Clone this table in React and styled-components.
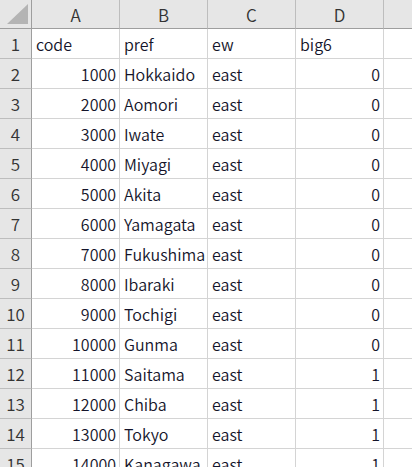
import React from "react";
import styled, { createGlobalStyle } from "styled-components";

const GlobalStyle = createGlobalStyle`
  html, body {
    margin: 0;
    padding: 0;
    background: #ffffff;
    overflow: hidden;
  }
`;

const columns = ["A", "B", "C", "D", "E"];

const rows = [
  ["code", "pref", "ew", "big6"],
  [1000, "Hokkaido", "east", 0],
  [2000, "Aomori", "east", 0],
  [3000, "Iwate", "east", 0],
  [4000, "Miyagi", "east", 0],
  [5000, "Akita", "east", 0],
  [6000, "Yamagata", "east", 0],
  [7000, "Fukushima", "east", 0],
  [8000, "Ibaraki", "east", 0],
  [9000, "Tochigi", "east", 0],
  [10000, "Gunma", "east", 0],
  [11000, "Saitama", "east", 1],
  [12000, "Chiba", "east", 1],
  [13000, "Tokyo", "east", 1],
  [14000, "Kanagawa", "east", 1],
];

const Sheet = styled.div`
  display: grid;
  grid-template-columns: 32px repeat(5, 88px);
  grid-auto-rows: 30px;
  grid-template-rows: 29px;
  width: 412px;
  height: 467px;
  overflow: hidden;
  font-family: "Noto Sans CJK JP", "Noto Sans", sans-serif;
  font-size: 16px;
  font-weight: 350;
`;

const Corner = styled.div`
  position: relative;
  background: #e6e6e6;
  border-right: 1px solid #9e9e9e;
  border-bottom: 1px solid #9e9e9e;

  &::after {
    content: "";
    position: absolute;
    right: 3px;
    bottom: 4px;
    width: 0;
    height: 0;
    border-left: 21px solid transparent;
    border-bottom: 20px solid #b4b4b4;
  }
`;

const ColHead = styled.div`
  display: flex;
  align-items: center;
  justify-content: center;
  background: #e6e6e6;
  color: #333;
  font-size: 17px;
  border-right: 1px solid #bdbdbd;
  border-bottom: 1px solid #9e9e9e;
`;

const RowHead = styled.div`
  display: flex;
  align-items: center;
  justify-content: center;
  background: #e6e6e6;
  color: #333;
  font-size: 17px;
  border-right: 1px solid #9e9e9e;
  border-bottom: 1px solid #bdbdbd;
`;

const Cell = styled.div`
  display: flex;
  align-items: center;
  justify-content: ${(p) => (p.$num ? "flex-end" : "flex-start")};
  padding: 0 ${(p) => (p.$num ? "3px" : "0")} 0 ${(p) => (p.$num ? "0" : "4px")};
  color: #14142a;
  white-space: nowrap;
  overflow: hidden;
  border-right: 1px solid #d4d4d4;
  border-bottom: 1px solid #d4d4d4;
`;

export default function App() {
  return (
    <>
      <GlobalStyle />
      <Sheet>
        <Corner />
        {columns.map((c) => (
          <ColHead key={c}>{c}</ColHead>
        ))}
        {rows.map((row, i) => (
          <React.Fragment key={i}>
            <RowHead>{i + 1}</RowHead>
            {row.map((v, j) => (
              <Cell key={j} $num={typeof v === "number"}>
                {v}
              </Cell>
            ))}
            <Cell />
          </React.Fragment>
        ))}
      </Sheet>
    </>
  );
}
